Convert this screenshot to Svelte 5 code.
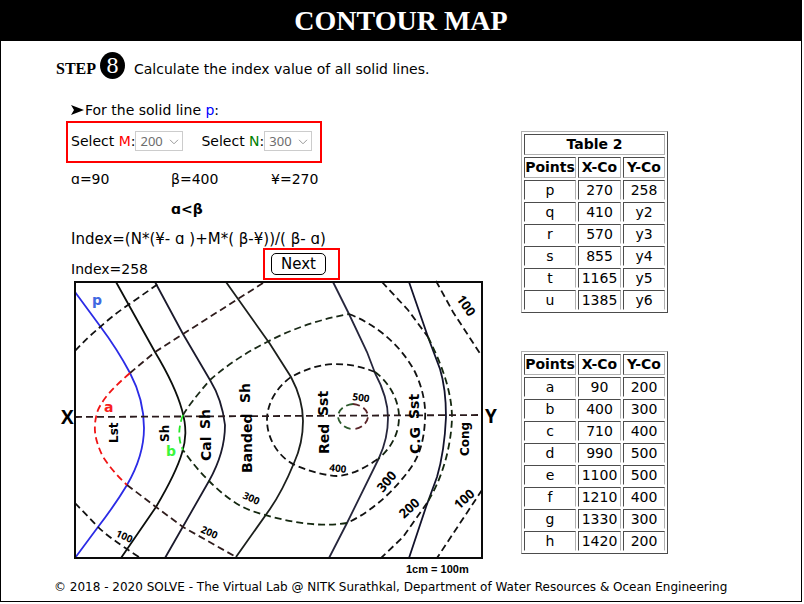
<script>
  const options = [100, 200, 300, 400, 500];
  const computed = [
    ['p', '270', '258'],
    ['q', '410', 'y2'],
    ['r', '570', 'y3'],
    ['s', '855', 'y4'],
    ['t', '1165', 'y5'],
    ['u', '1385', 'y6'],
  ];
  const known = [
    ['a', '90', '200'],
    ['b', '400', '300'],
    ['c', '710', '400'],
    ['d', '990', '500'],
    ['e', '1100', '500'],
    ['f', '1210', '400'],
    ['g', '1330', '300'],
    ['h', '1420', '200'],
  ];
</script>

{#snippet picker(id, name, tone, value)}
  <div class="picker">
    <label for={id}>Select <span class={tone}>{name}</span>:</label>
    <span class="select-wrap">
      <select {id} disabled {value}>
        {#each options as option}
          <option value={option}>{option}</option>
        {/each}
      </select>
      <svg class="chevron" viewBox="0 0 10 6" aria-hidden="true"><path d="M1 0.8 L5 4.8 L9 0.8" /></svg>
    </span>
  </div>
{/snippet}

{#snippet points(title, rows)}
  <table>
    <colgroup><col class="name" /><col class="x" /><col class="y" /></colgroup>
    <thead>
      {#if title}
        <tr><th colspan="3">{title}</th></tr>
      {/if}
      <tr><th>Points</th><th>X-Co</th><th>Y-Co</th></tr>
    </thead>
    <tbody>
      {#each rows as row}
        <tr>
          {#each row as cell}<td>{cell}</td>{/each}
        </tr>
      {/each}
    </tbody>
  </table>
{/snippet}

<div class="page">
  <header><h1>CONTOUR MAP</h1></header>

  <p class="step">
    <span class="step-word">STEP</span>
    <span class="step-number">8</span>
    <span>Calculate the index value of all solid lines.</span>
  </p>

  <main>
    <section class="work">
      <p class="lead">
        <svg class="arrow" viewBox="0 0 13 10" aria-hidden="true"><path d="M0 0 L13 5 L0 10 L3 5 Z" /></svg>For the solid line <span class="blue">p</span>:
      </p>
      <div class="pickers">
        {@render picker('pick-m', 'M', 'red', 200)}
        {@render picker('pick-n', 'N', 'green', 300)}
      </div>
      <div class="values">
        <span>ɑ=90</span><span>β=400</span><span>¥=270</span>
        <b>ɑ&lt;β</b>
      </div>
      <p class="line formula">Index=(N*(¥- ɑ )+M*( β-¥))/( β- ɑ)</p>
      <div class="line result">
        Index=258
        <div class="next"><button type="button">Next</button></div>
      </div>

      <svg class="map" viewBox="60 280 440 298" role="img" aria-label="Contour map">
        <g class="solid">
          <path stroke="#0c0f0c" d="M116 282 L155 352 C164 367 177 392 182 410 C187 428 186 440 182 453 C177 470 166 490 156 507 L121 558" />
          <path stroke="#1b1a2c" d="M155 282 L183 334 L210 380 C218 393 223 408 225 425 C225 445 218 465 209 481 L165 558" />
          <path stroke="#1c1f1c" d="M226 282 L270 344 L291 377 C300 394 303 408 303 421 C303 438 299 452 294 463 C287 480 279 496 270 509 L236 557" />
          <path stroke="#26263c" d="M333 282 L349 314 L367 352 L375 373 C383 388 388 402 388 418 C388 434 385 445 379 458 L347 523 L329 558" />
          <path stroke="#13132c" d="M409 282 L428 337 L440 369 C444 382 446 400 446 417 C445 440 442 460 437 477 L426 507 L409 558" />
          <path stroke="#2b2be6" d="M75 292 L100 326 C112 342 122 358 130 373 C140 392 144 408 144 428 C144 448 138 466 127 485 C118 500 108 514 98 527 L75 558" />
        </g>
        <g class="dashed">
          <path stroke="#111" d="M75 351 Q88 337 99 328 Q112 316 128 305 L161 282" />
          <path stroke="#111" d="M75 503 L98 527 Q108 537 139 557" />
          <path stroke="#2f1c1c" d="M263 283 L183 334 L155 352 L130 373" />
          <path stroke="#f01414" d="M130 373 C114 387 104 397 98 410 C92 428 95 440 103 457 Q113 472 127 485" />
          <path stroke="#2f1c1c" d="M127 485 L156 507 L183 527 L236 557" />
          <path stroke="#1a2a17" d="M183 415 Q190 403 210 380 Q235 358 267 342 Q305 322 349 314" />
          <path stroke="#111" d="M349 314 C380 326 403 349 415 372 C423 389 426 405 425 420 C424 440 420 455 410 469 C396 488 375 510 347 523" />
          <path stroke="#14280f" d="M347 523 C316 528 283 521 252 511 C235 505 220 492 209 481 Q194 466 183 450" />
          <path stroke="#28e628" d="M183 415 C178 428 178 440 183 450" />
          <path stroke="#111" d="M375 372 C360 366 348 364 333 364 C317 365 304 370 291 377 C277 387 267 403 267 420 C267 440 280 459 297 466 C312 472 323 475 337 476 C353 475 366 467 378 459" />
          <path stroke="#142410" d="M375 372 C389 382 399 400 399 417 C399 435 390 449 378 459" />
          <path stroke="#111" d="M382 282 L408 310 L428 337" />
          <path stroke="#14280f" d="M428 337 C440 361 452 390 452 418 C451 448 442 479 427 503" />
          <path stroke="#111" d="M427 503 L403 537 L380 559" />
          <path stroke="#111" d="M436 281 L453 312 L481 355" />
          <path stroke="#111" d="M482 490 L437 558" />
          <path stroke="#2c5a2c" d="M353 404 C343 405 338 411 338 417 C339 424 346 429 353 429" />
          <path stroke="#5a2428" d="M353 404 C363 405 368 411 368 417 C367 424 360 429 353 429" />
          <path stroke="#2a1a1c" d="M75 417 L482 415" />
        </g>
        <rect class="frame" x="75" y="282" width="407" height="276" />

        <g class="rock">
          <text font-size="12" transform="translate(118 443) rotate(-90)">Lst</text>
          <text font-size="12" transform="translate(169 442) rotate(-90)">Sh</text>
          <text transform="translate(211 461) rotate(-90)">Cal</text>
          <text transform="translate(210 429) rotate(-90)">Sh</text>
          <text transform="translate(252 473) rotate(-90)">Banded</text>
          <text transform="translate(250 403) rotate(-90)">Sh</text>
          <text transform="translate(329 454) rotate(-90)">Red</text>
          <text transform="translate(328 416) rotate(-90)">Sst</text>
          <text transform="translate(420 454) rotate(-90)">C.G</text>
          <text transform="translate(419 419) rotate(-90)">Sst</text>
          <text font-size="12" transform="translate(469 456) rotate(-90)">Cong</text>
        </g>
        <g class="height">
          <text transform="translate(115 536) rotate(24)">100</text>
          <text transform="translate(200 532) rotate(24)">200</text>
          <text transform="translate(242 498) rotate(24)">300</text>
          <text transform="translate(329 471) rotate(6)">400</text>
          <text transform="translate(352 400) rotate(8)">500</text>
          <text class="big" transform="translate(383 493) rotate(-50)">300</text>
          <text class="big" transform="translate(404 519) rotate(-42)">200</text>
          <text class="big" transform="translate(459 510) rotate(-42)">100</text>
          <text class="big" transform="translate(456 299) rotate(55)">100</text>
        </g>
        <text class="mark" fill="#4169e1" x="92" y="305">p</text>
        <text class="mark" fill="#f82020" x="104" y="412">a</text>
        <text class="mark" fill="#3cf53c" x="166" y="456">b</text>
        <text class="axis" x="61" y="424">X</text>
        <text class="axis" x="485" y="423">Y</text>
        <text class="scale" x="406" y="573">1cm = 100m</text>
      </svg>
    </section>

    <aside>
      {@render points('Table 2', computed)}
      {@render points('', known)}
    </aside>
  </main>

  <footer>© 2018 - 2020 SOLVE - The Virtual Lab @ NITK Surathkal, Department of Water Resources &amp; Ocean Engineering</footer>
</div>

<style>
  :global(body) {
    background: #fff;
  }
  .page {
    box-sizing: border-box;
    min-height: calc(100vh - 2px);
    margin: 0 2px 2px 0;
    border: 1px solid #000;
    color: #000;
    font-family: Verdana, "DejaVu Sans", sans-serif;
    font-size: 14px;
  }
  header {
    background: #000;
    color: #fff;
  }
  h1 {
    margin: 0;
    font: bold 28px/40px "Liberation Serif", serif;
    text-align: center;
  }
  p {
    margin: 0;
  }
  .step {
    display: flex;
    align-items: center;
    padding: 11px 0 0 55px;
    line-height: 30px;
  }
  .step-word {
    font: bold 16px/30px "Liberation Serif", serif;
    margin-right: 4px;
  }
  .step-number {
    width: 25px;
    margin-right: 9px;
    border-radius: 50%;
    background: #000;
    color: #fff;
    font: 24px/27px "Liberation Serif", serif;
    text-align: center;
    align-self: flex-start;
  }
  .step span:last-child,
  .step-word {
    padding-top: 2px;
  }
  main {
    display: flex;
    gap: 21px;
    padding-left: 59px;
  }
  .work {
    width: 440px;
    padding-top: 15px;
  }
  .lead {
    padding: 0 0 0 11px;
    line-height: 22px;
  }
  .arrow {
    width: 13px;
    height: 10px;
    margin-right: 1px;
  }
  .blue {
    color: #00f;
  }
  .red {
    color: #f00;
  }
  .green {
    color: #008000;
  }
  .pickers {
    box-sizing: border-box;
    display: flex;
    gap: 18px;
    width: 256px;
    height: 42px;
    margin-left: 6px;
    padding: 8px 3px 0;
    border: 2px solid #f00;
  }
  .picker {
    display: flex;
    line-height: 20px;
    height: 20px;
    white-space: nowrap;
  }
  .select-wrap {
    display: flex;
    position: relative;
  }
  select {
    box-sizing: border-box;
    appearance: none;
    width: 48px;
    height: 20px;
    margin: 0;
    padding: 0 4px;
    border: 1px solid #ccc;
    border-radius: 0;
    background: #fff;
    color: #6d6d6d;
    opacity: 1;
    font: 13px/18px "Noto Sans", sans-serif;
  }
  .chevron {
    position: absolute;
    right: 4px;
    top: 8px;
    width: 10px;
    height: 6px;
    fill: none;
    stroke: #999;
  }
  .values {
    display: grid;
    grid-template-columns: 100px 100px 100px;
    padding: 1px 0 0 11px;
    line-height: 30px;
  }
  .values b {
    grid-column: 2;
  }
  .line {
    padding-left: 11px;
    line-height: 30px;
    white-space: nowrap;
  }
  .formula {
    font-size: 15px;
  }
  .result {
    position: relative;
    margin-bottom: -4px;
  }
  .next {
    box-sizing: border-box;
    position: absolute;
    left: 203px;
    top: -6px;
    width: 77px;
    height: 32px;
    padding: 3px 6px;
    border: 2px solid #f00;
    display: flex;
  }
  button {
    box-sizing: border-box;
    width: 55px;
    height: 22px;
    padding: 0;
    border: 1px solid #000;
    border-radius: 5px;
    background: #fff;
    color: #000;
    font: 15px/20px Verdana, "DejaVu Sans", sans-serif;
  }
  .map {
    display: block;
    width: 100%;
  }
  .solid,
  .dashed,
  .frame {
    fill: none;
    stroke-width: 1.8;
  }
  .dashed {
    stroke-dasharray: 7 4;
  }
  .frame {
    stroke: #0a0a0a;
    stroke-width: 2;
  }
  .map text {
    font-family: "DejaVu Sans", sans-serif;
    font-weight: bold;
  }
  .rock {
    font-size: 14px;
  }
  .map .height text {
    font-family: "Open Sans", sans-serif;
    font-size: 10px;
  }
  .map .height .big {
    font-size: 13px;
  }
  .mark {
    font-size: 14px;
  }
  .map .axis {
    font-family: "Open Sans", sans-serif;
    font-size: 19px;
  }
  .map .scale {
    font-family: "Liberation Sans", sans-serif;
    font-size: 11px;
  }
  aside {
    display: flex;
    flex-direction: column;
    gap: 38px;
    padding-top: 47px;
  }
  table {
    width: 147px;
    table-layout: fixed;
    border: 1px solid;
    border-color: #b0b0b0 #4c4c4c #4c4c4c #b0b0b0;
    border-collapse: separate;
    border-spacing: 2px;
    text-align: center;
  }
  .name {
    width: 52px;
  }
  .x {
    width: 43px;
  }
  .y {
    width: 42px;
  }
  th,
  td {
    padding: 0;
    border: 1px solid;
    border-color: #4c4c4c #b0b0b0 #b0b0b0 #4c4c4c;
    line-height: 19px;
  }
  td {
    border-bottom-color: transparent;
    line-height: 18px;
  }
  footer {
    padding-left: 53px;
    font-size: 12px;
    line-height: 18px;
  }
</style>
